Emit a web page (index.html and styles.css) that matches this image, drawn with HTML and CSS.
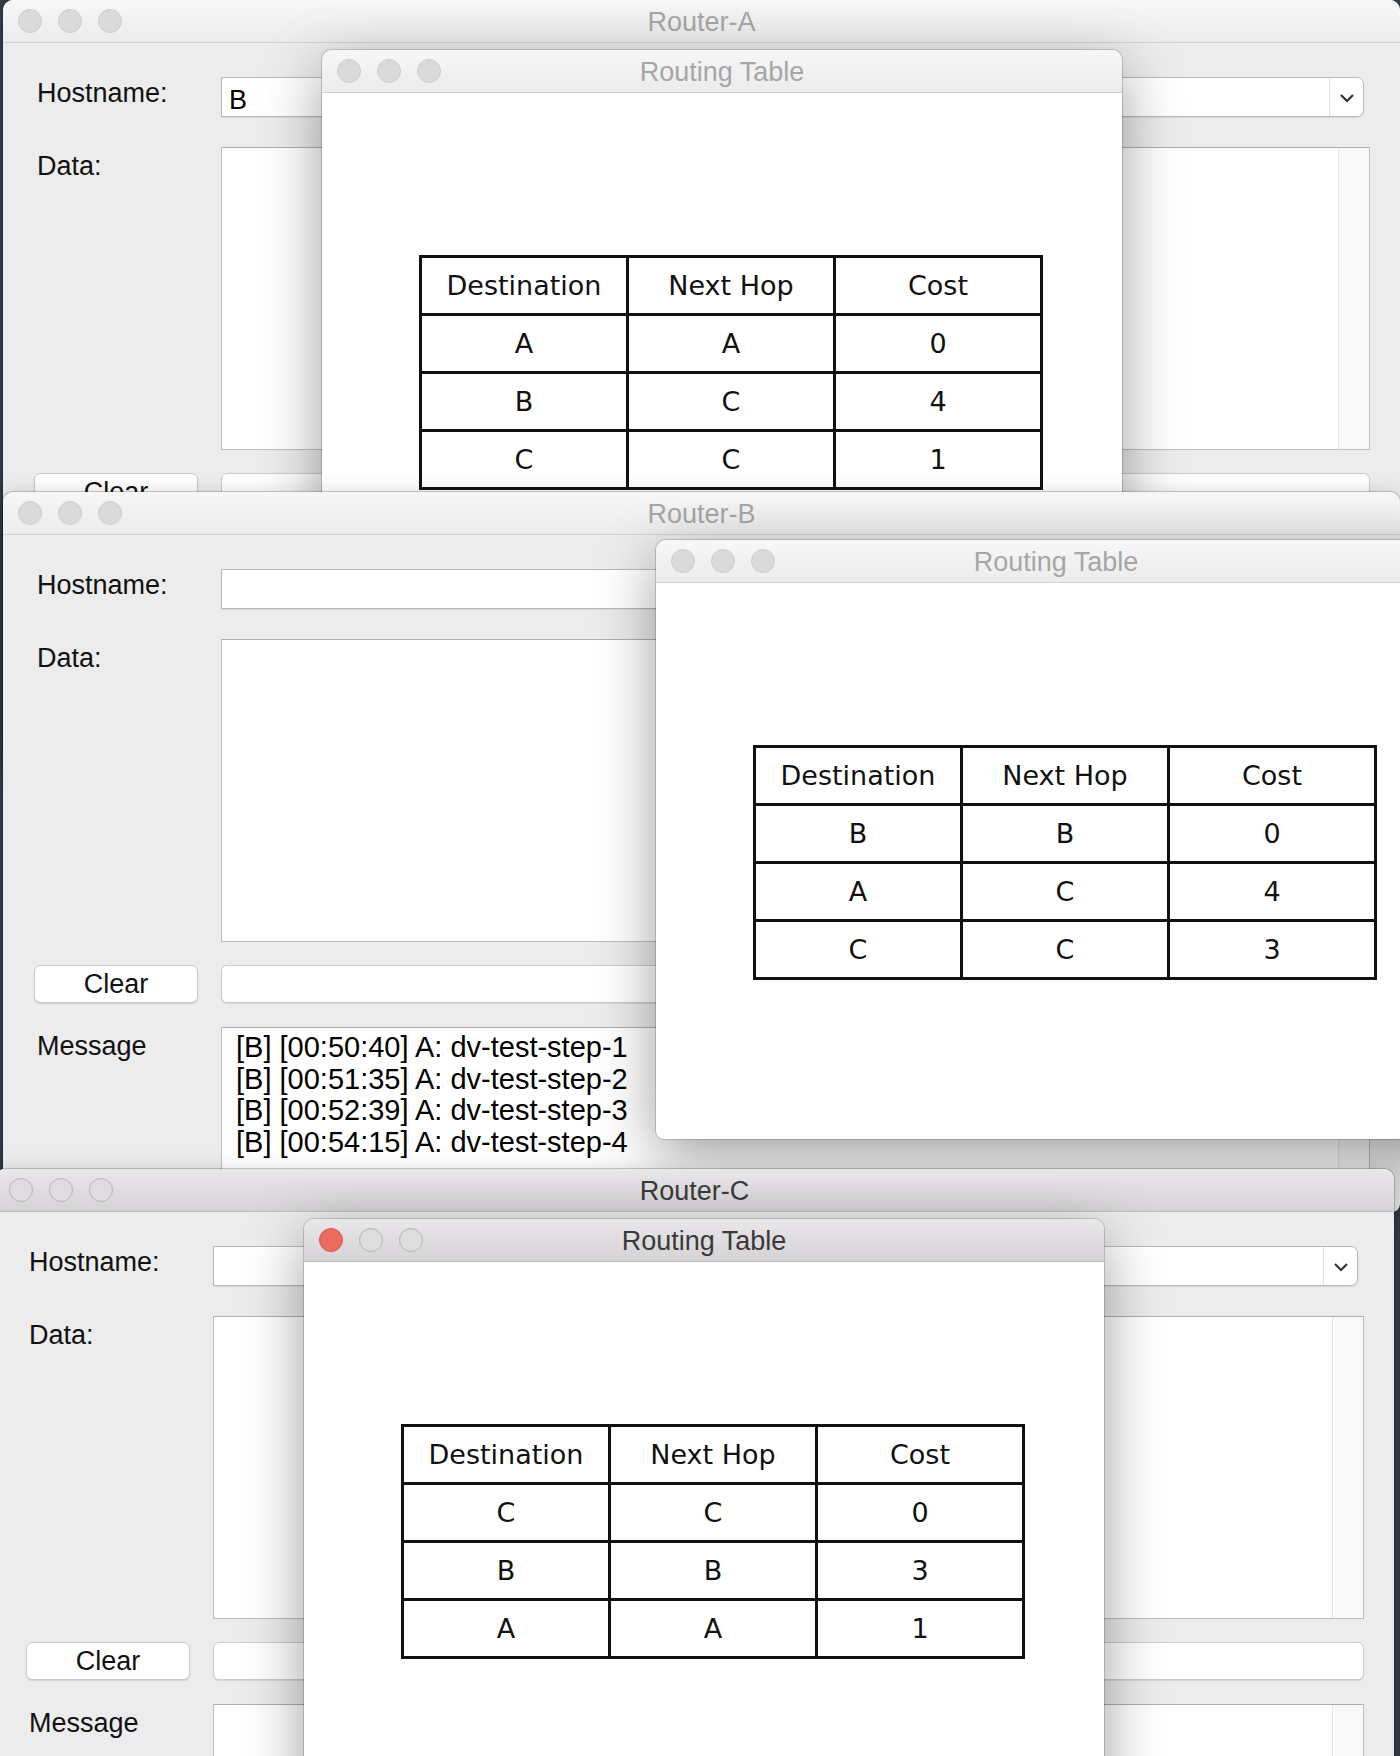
FILE: index.html
```html
<!DOCTYPE html>
<html>
<head>
<meta charset="utf-8">
<title>Routers</title>
<link rel="stylesheet" href="styles.css">
</head>
<body>
<div class="desk">

  <section class="win router router-a">
    <header class="titlebar">
      <div class="lights"><span class="light"></span><span class="light"></span><span class="light"></span></div>
      <div class="title">Router-A</div>
      <div></div>
    </header>
    <div class="form">
      <div class="row row-host">
        <div class="lbl lbl-host">Hostname:</div>
        <div class="combo"><div class="combo-text">B</div><div class="combo-btn"><svg width="16" height="10" viewBox="0 0 16 10"><path d="M2 2 L8 8 L14 2" fill="none" stroke="#333" stroke-width="2.2"/></svg></div></div>
      </div>
      <div class="row row-data">
        <div class="lbl">Data:</div>
        <div class="textbox"><div class="textbody"></div><div class="vscroll"></div></div>
      </div>
      <div class="row row-clear">
        <div class="btn">Clear</div>
        <div class="entry"></div>
      </div>
      <div class="row row-msg">
        <div class="lbl">Message</div>
        <div class="textbox"><div class="textbody"></div><div class="vscroll"></div></div>
      </div>
    </div>
  </section>

  <section class="win rt rt-a">
    <header class="titlebar">
      <div class="lights"><span class="light"></span><span class="light"></span><span class="light"></span></div>
      <div class="title">Routing Table</div>
      <div></div>
    </header>
    <div class="rt-body">
      <table class="rtable">
        <tr><th>Destination</th><th>Next Hop</th><th>Cost</th></tr>
        <tr><td>A</td><td>A</td><td>0</td></tr>
        <tr><td>B</td><td>C</td><td>4</td></tr>
        <tr><td>C</td><td>C</td><td>1</td></tr>
      </table>
    </div>
  </section>

  <section class="win router router-b">
    <header class="titlebar">
      <div class="lights"><span class="light"></span><span class="light"></span><span class="light"></span></div>
      <div class="title">Router-B</div>
      <div></div>
    </header>
    <div class="form">
      <div class="row row-host">
        <div class="lbl lbl-host">Hostname:</div>
        <div class="combo"><div class="combo-text"></div><div class="combo-btn"><svg width="16" height="10" viewBox="0 0 16 10"><path d="M2 2 L8 8 L14 2" fill="none" stroke="#333" stroke-width="2.2"/></svg></div></div>
      </div>
      <div class="row row-data">
        <div class="lbl">Data:</div>
        <div class="textbox"><div class="textbody"></div><div class="vscroll"></div></div>
      </div>
      <div class="row row-clear">
        <div class="btn">Clear</div>
        <div class="entry"></div>
      </div>
      <div class="row row-msg">
        <div class="lbl">Message</div>
        <div class="textbox">
          <div class="textbody log">
            <div>[B] [00:50:40] A: dv-test-step-1</div>
            <div>[B] [00:51:35] A: dv-test-step-2</div>
            <div>[B] [00:52:39] A: dv-test-step-3</div>
            <div>[B] [00:54:15] A: dv-test-step-4</div>
          </div>
          <div class="vscroll"></div>
        </div>
      </div>
    </div>
  </section>

  <section class="win rt rt-b">
    <header class="titlebar">
      <div class="lights"><span class="light"></span><span class="light"></span><span class="light"></span></div>
      <div class="title">Routing Table</div>
      <div></div>
    </header>
    <div class="rt-body">
      <table class="rtable">
        <tr><th>Destination</th><th>Next Hop</th><th>Cost</th></tr>
        <tr><td>B</td><td>B</td><td>0</td></tr>
        <tr><td>A</td><td>C</td><td>4</td></tr>
        <tr><td>C</td><td>C</td><td>3</td></tr>
      </table>
    </div>
  </section>

  <section class="win router router-c semi">
    <header class="titlebar">
      <div class="lights"><span class="light"></span><span class="light"></span><span class="light"></span></div>
      <div class="title">Router-C</div>
      <div></div>
    </header>
    <div class="form">
      <div class="row row-host">
        <div class="lbl lbl-host">Hostname:</div>
        <div class="combo"><div class="combo-text"></div><div class="combo-btn"><svg width="16" height="10" viewBox="0 0 16 10"><path d="M2 2 L8 8 L14 2" fill="none" stroke="#333" stroke-width="2.2"/></svg></div></div>
      </div>
      <div class="row row-data">
        <div class="lbl">Data:</div>
        <div class="textbox"><div class="textbody"></div><div class="vscroll"></div></div>
      </div>
      <div class="row row-clear">
        <div class="btn">Clear</div>
        <div class="entry"></div>
      </div>
      <div class="row row-msg">
        <div class="lbl">Message</div>
        <div class="textbox"><div class="textbody"></div><div class="vscroll"></div></div>
      </div>
    </div>
  </section>

  <section class="win rt rt-c active">
    <header class="titlebar">
      <div class="lights"><span class="light close"></span><span class="light"></span><span class="light"></span></div>
      <div class="title">Routing Table</div>
      <div></div>
    </header>
    <div class="rt-body">
      <table class="rtable">
        <tr><th>Destination</th><th>Next Hop</th><th>Cost</th></tr>
        <tr><td>C</td><td>C</td><td>0</td></tr>
        <tr><td>B</td><td>B</td><td>3</td></tr>
        <tr><td>A</td><td>A</td><td>1</td></tr>
      </table>
    </div>
  </section>

</div>
</body>
</html>
```

FILE: styles.css
```css
html, body {
  margin: 0;
  padding: 0;
}

body {
  width: 1400px;
  height: 1756px;
  overflow: hidden;
  background: #33404d;
  font-family: "Liberation Sans", Arial, sans-serif;
  color: #111;
}

.desk {
  position: relative;
  width: 1400px;
  height: 1756px;
  overflow: hidden;
}

/* ---------- windows ---------- */
.win {
  position: absolute;
  box-sizing: border-box;
  border-radius: 10px 10px 8px 8px;
  overflow: hidden;
}

.router {
  width: 1397px;
  background: #ececec;
  box-shadow: 0 0 0 1px rgba(0, 0, 0, 0.18), 0 6px 24px rgba(0, 0, 0, 0.25);
}

.router-a { left: 3px; top: 0; height: 760px; }
.router-b { left: 3px; top: 492px; height: 720px; }
.router-c { left: -5px; top: 1169px; width: 1399px; height: 700px; }

.rt {
  width: 800px;
  height: 600px;
  background: #fff;
  box-shadow: 0 0 0 1px rgba(0, 0, 0, 0.16), 0 18px 60px rgba(0, 0, 0, 0.38);
}

.rt-a { left: 322px; top: 50px; }
.rt-b { left: 656px; top: 540px; height: 599px; }
.rt-c { left: 304px; top: 1219px; }

/* ---------- title bar ---------- */
.titlebar {
  box-sizing: border-box;
  height: 43px;
  display: grid;
  grid-template-columns: 1fr auto 1fr;
  align-items: center;
  background: linear-gradient(#f7f7f7, #ececec);
  border-bottom: 1px solid #d2d2d2;
}

.semi .titlebar,
.active .titlebar {
  background: linear-gradient(#e9e7e9, #d5d3d5);
  border-bottom: 1px solid #bdbbbd;
}

.title {
  font-size: 27px;
  color: #a6a6a6;
  white-space: nowrap;
  padding-top: 2px;
}

.semi .title,
.active .title {
  color: #3a3a3a;
}

.lights {
  display: flex;
  gap: 16px;
  padding-left: 15px;
}

.light {
  box-sizing: border-box;
  width: 24px;
  height: 24px;
  border-radius: 50%;
  background: #dadada;
  border: 1px solid #cdcdcd;
}

.semi .light,
.active .light {
  background: #dedcde;
  border: 1px solid #b7b5b7;
}

.active .light.close {
  background: #ed6a5e;
  border: 1px solid #d3574b;
}

.router-c .lights {
  padding-left: 14px;
}

/* ---------- form ---------- */
.form {
  display: flex;
  flex-direction: column;
  padding: 34px 30px 0 31px;
}

.row {
  display: flex;
  column-gap: 23px;
}

.lbl {
  flex: none;
  width: 161px;
  padding-left: 3px;
  font-size: 27px;
  line-height: 30px;
  margin-top: 4px;
  color: #111;
}

.row-host {
  height: 40px;
  align-items: center;
}

.lbl-host {
  margin-top: 0;
  margin-bottom: 8px;
}

.row-data {
  margin-top: 30px;
  height: 303px;
}

.row-clear {
  margin-top: 23px;
  height: 38px;
}

.row-msg {
  margin-top: 24px;
  height: 240px;
}

.combo {
  flex: 1;
  height: 40px;
  box-sizing: border-box;
  margin-right: 6px;
  display: flex;
  background: #fff;
  border: 1px solid #b9b9b9;
  border-radius: 0 7px 7px 0;
  box-shadow: 0 1px 1px rgba(0, 0, 0, 0.08);
}

.combo-text {
  flex: 1;
  font-size: 27px;
  line-height: 38px;
  padding-left: 7px;
  padding-top: 3px;
  color: #000;
}

.combo-btn {
  width: 33px;
  border-left: 1px solid #e2e2e2;
  display: flex;
  align-items: center;
  justify-content: center;
  padding-top: 2px;
}

.textbox {
  flex: 1;
  display: flex;
  box-sizing: border-box;
  background: #fff;
  border: 1px solid #bdbdbd;
  border-top-color: #adadad;
}

.textbody {
  flex: 1;
}

.vscroll {
  width: 30px;
  background: #f9f9f9;
  border-left: 1px solid #e6e6e6;
}

.log {
  padding: 4px 0 0 14px;
  font-size: 29px;
  line-height: 31.7px;
  color: #000;
  white-space: nowrap;
}

.btn {
  flex: none;
  width: 164px;
  box-sizing: border-box;
  height: 38px;
  background: #fff;
  border: 1px solid #c9c9c9;
  border-radius: 6px;
  box-shadow: 0 1px 1px rgba(0, 0, 0, 0.12);
  font-size: 27px;
  line-height: 36px;
  text-align: center;
  color: #111;
}

.entry {
  flex: 1;
  box-sizing: border-box;
  height: 38px;
  background: #fff;
  border: 1px solid #cbcbcb;
  border-radius: 6px;
  box-shadow: 0 1px 1px rgba(0, 0, 0, 0.1);
}

/* ---------- routing table ---------- */
.rt-body {
  padding: 162px 0 0 97px;
}

.rtable {
  border-collapse: collapse;
  font-family: "DejaVu Sans", sans-serif;
  font-size: 27px;
  color: #111;
}

.rtable th,
.rtable td {
  width: 204px;
  height: 55px;
  padding: 0;
  border: 3px solid #111;
  text-align: center;
  vertical-align: middle;
  font-weight: normal;
}
```
